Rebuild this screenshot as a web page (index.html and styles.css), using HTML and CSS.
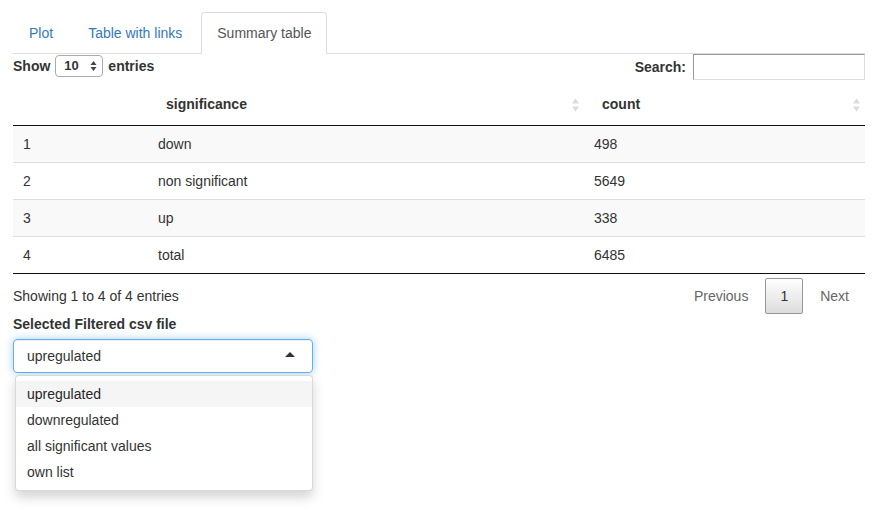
FILE: index.html
```html
<!DOCTYPE html>
<html>
<head>
<meta charset="utf-8">
<link rel="stylesheet" href="styles.css">
</head>
<body>
<div class="page">
  <ul class="tabs">
    <li class="tab"><a>Plot</a></li>
    <li class="tab"><a>Table with links</a></li>
    <li class="tab active"><a>Summary table</a></li>
  </ul>
  <div class="dt-wrapper">
    <div class="dt-top">
      <div class="dt-length">
        <span class="lbl">Show</span>
        <span class="len-select"><span>10</span>
          <svg width="7" height="12" viewBox="0 0 7 12"><path d="M3.5 1 L6.5 5 L0.5 5 Z M3.5 11 L6.5 7 L0.5 7 Z" fill="#444"/></svg>
        </span>
        <span class="lbl">entries</span>
      </div>
      <div class="dt-filter">
        <span class="lbl">Search:</span>
        <span class="search-input"></span>
      </div>
    </div>
    <table class="dt">
      <colgroup>
        <col class="c1"><col class="c2"><col class="c3">
      </colgroup>
      <thead>
        <tr>
          <th class="nosort"></th>
          <th><div class="th-in"><span>significance</span><svg class="sort" width="7" height="14" viewBox="0 0 7 14"><path d="M3.5 0.5 L7 5.5 L0 5.5 Z M3.5 13.5 L7 8.5 L0 8.5 Z" fill="#dcdcdc"/></svg></div></th>
          <th><div class="th-in"><span>count</span><svg class="sort" width="7" height="14" viewBox="0 0 7 14"><path d="M3.5 0.5 L7 5.5 L0 5.5 Z M3.5 13.5 L7 8.5 L0 8.5 Z" fill="#dcdcdc"/></svg></div></th>
        </tr>
      </thead>
      <tbody>
        <tr class="odd"><td>1</td><td>down</td><td>498</td></tr>
        <tr><td>2</td><td>non significant</td><td>5649</td></tr>
        <tr class="odd"><td>3</td><td>up</td><td>338</td></tr>
        <tr><td>4</td><td>total</td><td>6485</td></tr>
      </tbody>
    </table>
    <div class="dt-bottom">
      <div class="dt-info">Showing 1 to 4 of 4 entries</div>
      <div class="dt-paging">
        <span class="pbtn disabled">Previous</span>
        <span class="pbtn current">1</span>
        <span class="pbtn disabled">Next</span>
      </div>
    </div>
  </div>
  <div class="form-group">
    <label class="form-label">Selected Filtered csv file</label>
    <div class="selectize">
      <div class="selectize-input">
        <span>upregulated</span>
        <span class="caret-up"></span>
      </div>
      <div class="selectize-dropdown">
        <div class="opt active">upregulated</div>
        <div class="opt">downregulated</div>
        <div class="opt">all significant values</div>
        <div class="opt">own list</div>
      </div>
    </div>
  </div>
</div>
</body>
</html>
```
FILE: styles.css
```css
* { box-sizing: border-box; }
html, body { margin: 0; padding: 0; background: #fff; }
body {
  font-family: "Liberation Sans", Arial, sans-serif;
  font-size: 14px;
  line-height: 20px;
  color: #333;
}
.page {
  padding: 12px 16px 0 13px;
}
.tabs {
  list-style: none;
  margin: 0;
  padding: 0;
  display: flex;
  border-bottom: 1px solid #ddd;
}
.tab {
  margin-bottom: -1px;
  margin-right: 2px;
}
.tab a {
  display: block;
  padding: 10px 15px;
  line-height: 20px;
  border: 1px solid transparent;
  border-radius: 4px 4px 0 0;
  color: #337ab7;
}
.tab:nth-child(2) a { padding: 10px 16px 10px 16px; }
.tab.active a {
  color: #555;
  background: #fff;
  border-color: #ddd #ddd transparent;
}
.dt-top {
  display: flex;
  justify-content: space-between;
  height: 26px;
}
.lbl { font-weight: bold; }
.dt-length {
  display: flex;
  align-items: center;
  height: 22px;
  margin-top: 1px;
  gap: 5px;
}
.len-select {
  display: inline-flex;
  align-items: center;
  justify-content: space-between;
  width: 48px;
  height: 22px;
  border: 1px solid #aaa;
  border-radius: 4px;
  padding: 0 5px 0 8px;
  font-weight: bold;
  font-size: 13px;
}
.dt-filter {
  display: flex;
  align-items: center;
  gap: 7px;
  height: 26px;
}
.search-input {
  display: block;
  width: 172px;
  height: 26px;
  border: 1px solid;
  border-color: #999 #ddd #ddd #999;
}
table.dt {
  width: 100%;
  border-collapse: collapse;
  margin-top: 4px;
  border-bottom: 1px solid #111;
  table-layout: fixed;
}
col.c1 { width: 135px; }
col.c2 { width: 436px; }
table.dt th {
  text-align: left;
  font-weight: bold;
  padding: 10px 5px 10px 18px;
  border-bottom: 1px solid #111;
  height: 41px;
}
.th-in {
  display: flex;
  align-items: center;
  justify-content: space-between;
}
.sort { display: block; margin-top: 1px; }
table.dt td {
  padding: 8px 10px;
  border-top: 1px solid #ddd;
  height: 37px;
}
table.dt tbody tr:first-child td { border-top: none; height: 36px; }
table.dt tr.odd td { background: #f9f9f9; }
.dt-bottom {
  display: flex;
  justify-content: space-between;
  align-items: center;
  padding-top: 4px;
}
.dt-paging {
  display: flex;
  margin-right: 1px;
}
.pbtn {
  display: block;
  padding: 7px 14px;
  line-height: 20px;
  border: 1px solid transparent;
  border-radius: 2px;
  margin-left: 2px;
}
.pbtn.disabled { color: #666; }
.pbtn.current {
  color: #333;
  border-color: #979797;
  background: linear-gradient(to bottom, #fff 0%, #dcdcdc 100%);
}
.form-label {
  display: block;
  font-weight: bold;
  margin-bottom: 5px;
}
.selectize {
  width: 300px;
  padding-bottom: 20px;
}
.selectize-input {
  display: flex;
  align-items: center;
  justify-content: space-between;
  height: 34px;
  padding: 6px 17px 6px 13px;
  border: 1px solid #66afe9;
  border-radius: 4px;
  box-shadow: inset 0 1px 1px rgba(0,0,0,.075), 0 0 8px rgba(102,175,233,.6);
}
.caret-up {
  width: 0;
  height: 0;
  border-style: solid;
  border-width: 0 5px 5px 5px;
  border-color: transparent transparent #333 transparent;
  margin-top: -2px;
}
.selectize-dropdown {
  margin: 2px 0 0 2px;
  background: #fff;
  border: 1px solid rgba(0,0,0,.15);
  border-radius: 4px;
  box-shadow: 0 6px 12px rgba(0,0,0,.175);
  padding: 5px 0;
}
.opt {
  padding: 3px 11px;
  line-height: 20px;
  color: #333;
}
.opt.active { background: #f5f5f5; color: #262626; }
```
